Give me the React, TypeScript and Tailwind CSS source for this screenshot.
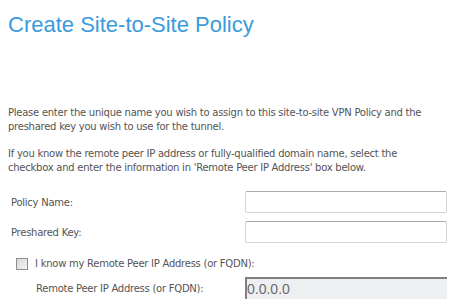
export default function App() {
  return (
    <div className="h-[307px] w-[465px] overflow-hidden bg-white px-2 font-['DejaVu_Sans',sans-serif] text-[10px] tracking-[-0.25px] text-[#545454]">
      <h1 className="pt-[12px] font-['Liberation_Sans',Arial,sans-serif] text-[22px] leading-[26px] tracking-normal text-[#3a9bdc]">
        Create Site-to-Site Policy
      </h1>

      <p className="mt-[68px] leading-[14px]">
        Please enter the unique name you wish to assign to this site-to-site VPN Policy and the
        <br />
        preshared key you wish to use for the tunnel.
      </p>
      <p className="mt-[13px] leading-[14px]">
        If you know the remote peer IP address or fully-qualified domain name, select the
        <br />
        checkbox and enter the information in 'Remote Peer IP Address' box below.
      </p>

      <div className="mt-[16px] flex flex-col">
        <div className="flex h-[22px] items-center">
          <label className="w-[237px] pl-[3px]">Policy Name:</label>
          <input className="h-[22px] w-[202px] rounded-[2px] border border-[#d4d4d8] border-t-[#a8a8b0] bg-white outline-none" />
        </div>
        <div className="mt-[8px] flex h-[22px] items-center">
          <label className="w-[237px] pl-[3px]">Preshared Key:</label>
          <input className="h-[22px] w-[202px] rounded-[2px] border border-[#d4d4d8] border-t-[#a8a8b0] bg-white outline-none" />
        </div>
        <div className="mt-[13px] flex items-center gap-[7px] pl-[8px]">
          <span className="h-[12px] w-[12px] border border-[#8f8f8f] bg-gradient-to-br from-[#d8d8d8] to-[#f4f4f4]" />
          <span>I know my Remote Peer IP Address (or FQDN):</span>
        </div>
        <div className="mt-[6px] flex h-[22px] items-center">
          <label className="w-[237px] pl-[28px]">Remote Peer IP Address (or FQDN):</label>
          <input
            disabled
            value="0.0.0.0"
            className="h-[22px] w-[202px] border-l-2 border-t-2 border-l-[#808080] border-t-[#808080] bg-[#eeeff2] pl-0 font-['Liberation_Sans',Arial,sans-serif] text-[14px] tracking-normal text-[#6a6a6a] outline-none"
          />
        </div>
      </div>
    </div>
  );
}
